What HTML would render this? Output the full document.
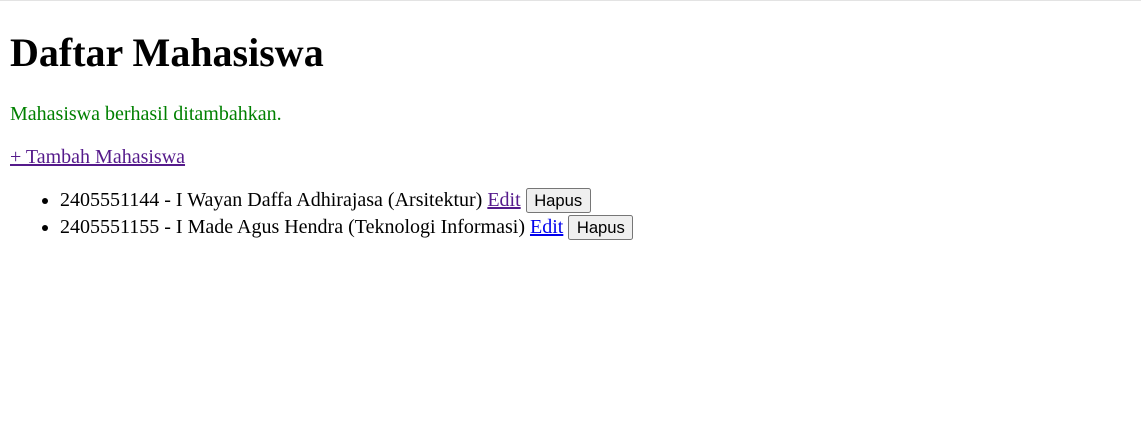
<!DOCTYPE html>
<html><head><meta charset="utf-8"><style>
html{border-top:1px solid #e3e3e3;}
body{zoom:1.25;margin:8px;font-family:"Liberation Serif",serif;font-size:16px;color:#000;background:#fff;}
h1{font-size:2em;margin:22.6px 0 21px;}
p{margin:16px 0;}
a{color:#0000ee;}
a.v{color:#551a8b;}
ul{margin:14.4px 0 16px;padding-left:40px;}
li{line-height:21.6px;}
button{font-family:"Liberation Sans",sans-serif;font-size:13.3px;background:#efefef;border:1px solid #767676;border-radius:2px;padding:1px 6px;height:20px;vertical-align:baseline;color:#000;}
</style></head><body>
<h1>Daftar Mahasiswa</h1>
<p style="color:green">Mahasiswa berhasil ditambahkan.</p>
<a class="v" href="#">+ Tambah Mahasiswa</a>
<ul>
<li>2405551144 - I Wayan Daffa Adhirajasa (Arsitektur) <a class="v" href="#">Edit</a> <button>Hapus</button></li>
<li>2405551155 - I Made Agus Hendra (Teknologi Informasi) <a href="#">Edit</a> <button>Hapus</button></li>
</ul>
</body></html>
